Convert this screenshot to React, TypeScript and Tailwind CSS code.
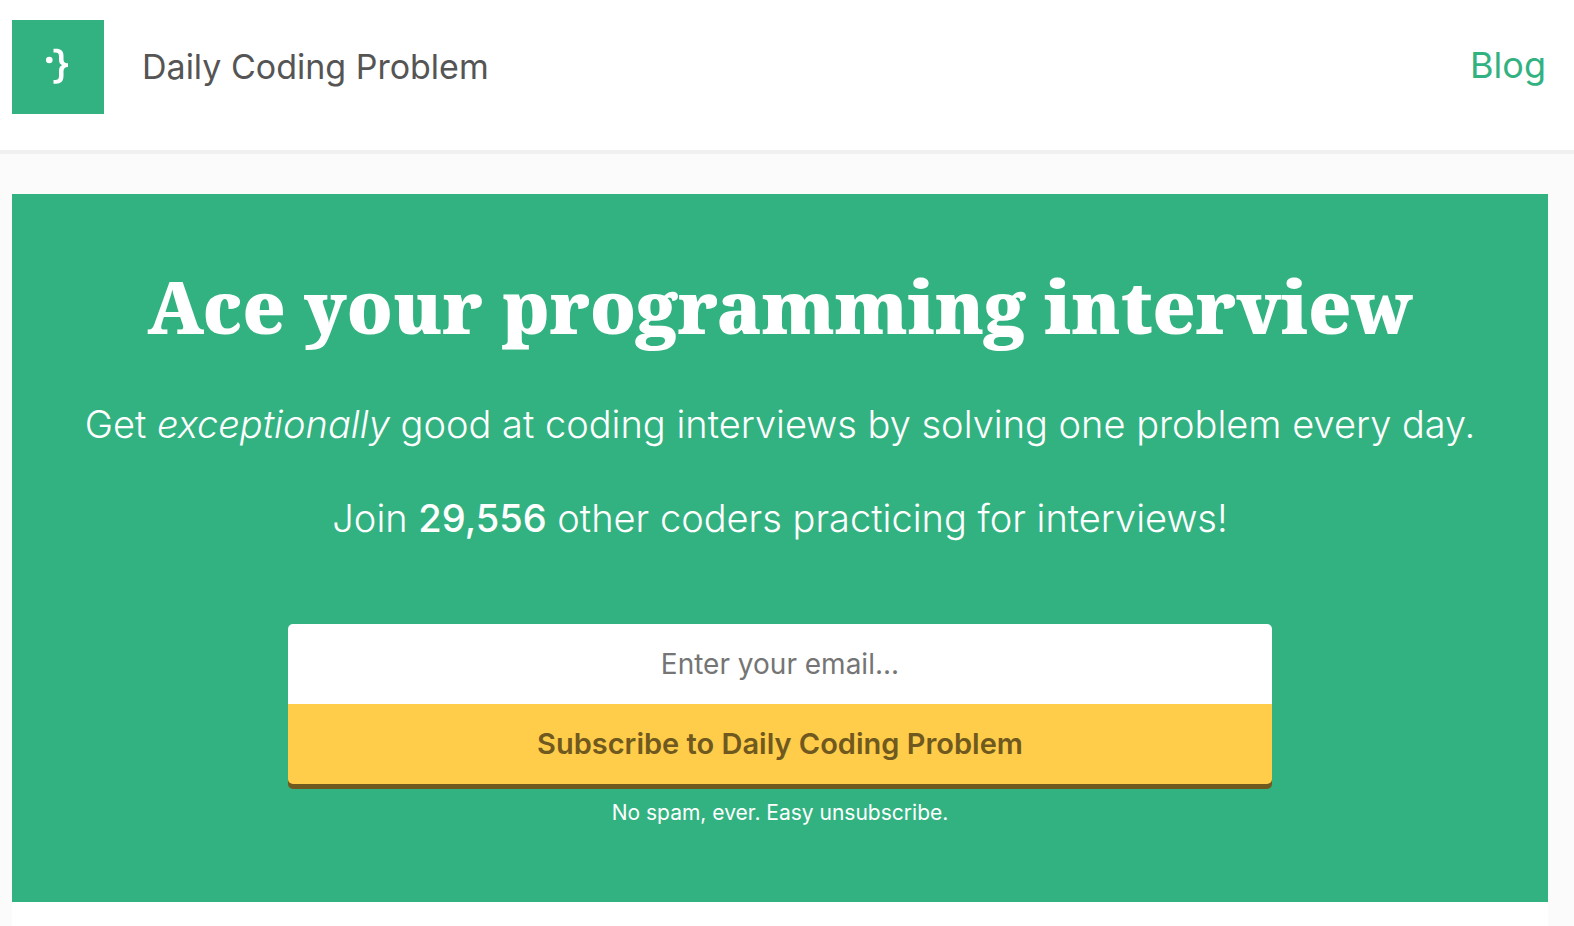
export default function App() {
  return (
    <div className="min-h-screen bg-[#fbfbfb] font-['Inter',sans-serif]">
      <header className="flex items-center justify-between border-b-4 border-[#f0f0f0] bg-white pt-5 pr-7 pb-9 pl-3">
        <a href="#home" className="flex items-center gap-[38px] text-[34px] leading-10 text-[#555]">
          <svg viewBox="0 0 92 94" className="h-[94px] w-[92px] bg-[#33b281]" fill="none" aria-hidden="true">
            <circle cx="37.3" cy="40" r="3.3" fill="white" />
            <path d="M41.5 28.7H44C49 28.7 51.5 31 51.5 35.5V39C51.5 42 52.7 43.2 56 43.2V47C52.7 47 51.5 48.5 51.5 51.5V56C51.5 61 49 63.7 44 63.7H41.5V60H43.2C46 60 47 58.7 47 56V51C47 48 48 46 50.2 45.2C48 44.3 47 42.5 47 39.5V36C47 33.5 46 32.4 43.2 32.4H41.5Z" fill="white" />
          </svg>
          <span>Daily Coding Problem</span>
        </a>
        <nav className="pb-1">
          <a href="#blog" className="text-4xl text-[#33b281]">Blog</a>
        </nav>
      </header>
      <main className="pt-10 pr-[26px] pl-3">
        <section className="flex flex-col items-center bg-[#33b281] pt-16 pb-[72px] text-center text-white">
          <h1 className="font-['Noto_Serif','Liberation_Serif',serif] text-[72px] leading-[96px] font-black">Ace your programming interview</h1>
          <p className="mt-10 text-[38px] leading-[60px] font-light">Get <em>exceptionally</em> good at coding interviews by solving one problem every day.</p>
          <p className="mt-[34px] text-[38px] leading-[60px] font-light">Join <strong className="font-medium">29,556</strong> other coders practicing for interviews!</p>
          <form className="mt-[76px] flex w-[64%] flex-col" onSubmit={(e) => e.preventDefault()}>
            <input type="email" aria-label="Email" placeholder="Enter your email..." className="h-20 rounded-t-[5px] bg-white text-center text-[28px] text-[#333] placeholder:text-[#757575]" />
            <button className="h-20 rounded-b-[5px] bg-[#ffcd4a] text-[29px] font-semibold text-[#6f591f] shadow-[0_5px_0_#6f591f]">Subscribe to Daily Coding Problem</button>
          </form>
          <small className="mt-3 text-[21px] leading-[34px]">No spam, ever. Easy unsubscribe.</small>
        </section>
        <div className="h-6 rounded-t-[5px] bg-white" />
      </main>
    </div>
  )
}
